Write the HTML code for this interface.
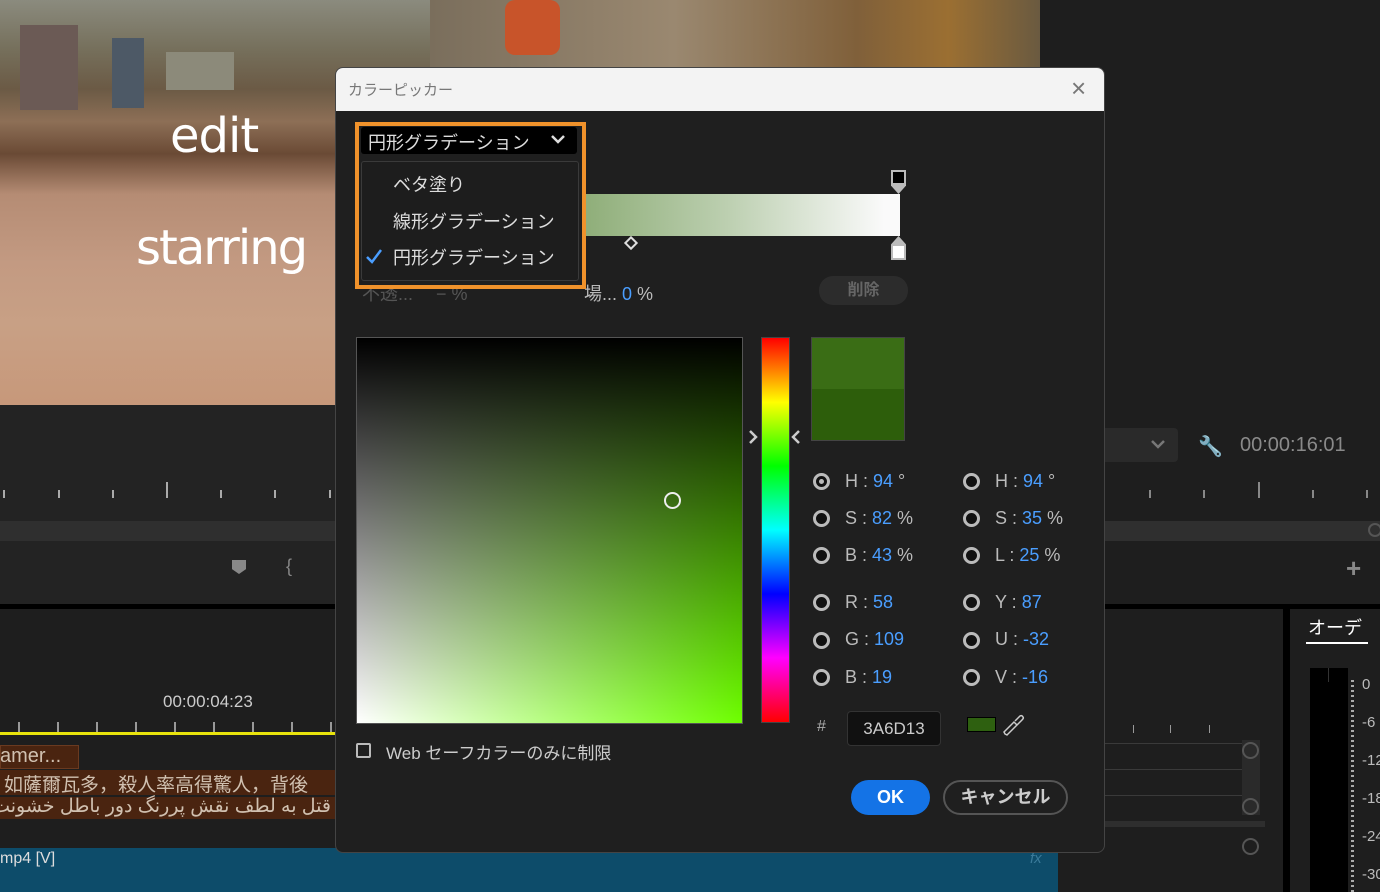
<!DOCTYPE html>
<html><head><meta charset="utf-8"><style>
*{margin:0;padding:0;box-sizing:border-box}
html,body{width:1380px;height:892px;overflow:hidden}
body{background:#1e1e1e;position:relative;font-family:"Liberation Sans","Noto Sans CJK JP",sans-serif;color:#ccc}
.a{position:absolute}
.tick{position:absolute;width:2px;background:#aaa}
.rad{position:absolute;width:17px;height:17px;border-radius:50%;border:3px solid #bbb;background:#111}
.lbl{position:absolute;font-size:18px;color:#bbb}
.lbl b{font-weight:normal;color:#4a9eff}
.jp{font-family:"Liberation Sans","Noto Sans CJK JP",sans-serif}
</style></head><body>
<!-- video -->
<div class="a" style="left:0;top:0;width:1040px;height:405px;background:linear-gradient(180deg,#8b8b7e 0%,#76705c 12%,#6b5a45 22%,#8d6f56 30%,#6a4a35 38%,#b58c74 48%,#c39a82 65%,#c8a085 80%,#c7987a 100%)"></div>
<div class="a" style="left:430px;top:0;width:610px;height:67px;background:linear-gradient(90deg,#7a6e5c,#9a8870 40%,#80603a 70%,#9b6f32 85%,#6a5a40)"></div>
<div class="a" style="left:505px;top:0;width:55px;height:55px;background:#c8542a;border-radius:10px"></div>
<div class="a" style="left:20px;top:25px;width:58px;height:85px;background:#6b5a55"></div>
<div class="a" style="left:112px;top:38px;width:32px;height:70px;background:#4d5966"></div>
<div class="a" style="left:166px;top:52px;width:68px;height:38px;background:#8c8a7a"></div>
<div class="a" style="left:170px;top:108px;font-size:48px;color:#fff;font-family:'DejaVu Sans',sans-serif;letter-spacing:-1px">edit</div>
<div class="a" style="left:136px;top:220px;font-size:48px;color:#fff;font-family:'DejaVu Sans',sans-serif;letter-spacing:-2px">starring</div>
<!-- left lower panels -->
<div class="a" style="left:0;top:405px;width:1040px;height:200px;background:#232323"></div>
<div class="tick" style="left:3px;top:490px;height:8px"></div>
<div class="tick" style="left:58px;top:490px;height:8px"></div>
<div class="tick" style="left:112px;top:490px;height:8px"></div>
<div class="tick" style="left:166px;top:482px;height:16px"></div>
<div class="tick" style="left:220px;top:490px;height:8px"></div>
<div class="tick" style="left:274px;top:490px;height:8px"></div>
<div class="tick" style="left:329px;top:490px;height:8px"></div>
<div class="a" style="left:0;top:521px;width:1380px;height:20px;background:#2f2f2f"></div>
<div class="a" style="left:232px;top:560px;width:14px;height:14px;background:#888;clip-path:polygon(0 0,100% 0,100% 65%,50% 100%,0 65%)"></div>
<div class="a" style="left:286px;top:556px;font-size:18px;color:#888">{</div>
<div class="a" style="left:0;top:604px;width:1380px;height:5px;background:#000"></div>
<div class="a" style="left:0;top:609px;width:1285px;height:283px;background:#1e1e1e"></div>
<div class="a" style="left:163px;top:692px;font-size:17px;color:#ccc">00:00:04:23</div>
<div class="a" style="left:0;top:722px;width:335px;height:12px;background:repeating-linear-gradient(90deg,transparent 0 18px,#999 18px 20px,transparent 20px 39px)"></div>
<div class="a" style="left:0;top:732px;width:1060px;height:3px;background:#e8e30c"></div>
<div class="a" style="left:0;top:745px;width:79px;height:24px;background:#4a2410;border:1px solid #6a3a20"></div>
<div class="a" style="left:0;top:745px;font-size:20px;color:#d0c0b0">amer...</div>
<div class="a" style="left:0;top:770px;width:335px;height:25px;background:#4a2410"></div>
<div class="a" style="left:4px;top:770px;font-size:19px;color:#d0c0b0;white-space:nowrap;width:331px;overflow:hidden">如薩爾瓦多，殺人率高得驚人，背後</div>
<div class="a" style="left:0;top:797px;width:335px;height:22px;background:#4a2410"></div>
<div class="a" style="left:0;top:795px;font-size:19px;color:#d0c0b0;white-space:nowrap;width:331px;overflow:hidden;direction:rtl">قتل به لطف نقش پررنگ دور باطل خشونت</div>
<div class="a" style="left:0;top:848px;width:1058px;height:44px;background:#0d4c6a"></div>
<div class="a" style="left:0;top:850px;font-size:16px;color:#ddd">mp4 [V]</div>
<div class="a" style="left:1030px;top:850px;font-size:15px;color:#3a7a9a;font-style:italic">fx</div>
<!-- right side -->
<div class="a" style="left:1100px;top:428px;width:78px;height:34px;background:#2a2a2a;border-radius:4px"></div>
<svg class="a" style="left:1150px;top:438px" width="16" height="12"><path d="M2 3 L8 9 L14 3" stroke="#777" stroke-width="2.5" fill="none"/></svg>
<div class="a" style="left:1198px;top:434px;font-size:20px;color:#888">🔧</div>
<div class="a" style="left:1240px;top:434px;font-size:20px;color:#8a8a8a">00:00:16:01</div>
<div class="tick" style="left:1149px;top:490px;height:8px;background:#888"></div>
<div class="tick" style="left:1203px;top:490px;height:8px;background:#888"></div>
<div class="tick" style="left:1258px;top:482px;height:16px;background:#888"></div>
<div class="tick" style="left:1312px;top:490px;height:8px;background:#888"></div>
<div class="tick" style="left:1366px;top:490px;height:8px;background:#888"></div>
<div class="a" style="left:1368px;top:523px;width:14px;height:14px;border-radius:50%;border:2px solid #555"></div>
<div class="a" style="left:1346px;top:553px;font-size:26px;color:#888;font-weight:bold">+</div>
<div class="a" style="left:1283px;top:609px;width:7px;height:283px;background:#000"></div>
<div class="a" style="left:1105px;top:743px;width:140px;height:1px;background:#3a3a3a"></div>
<div class="a" style="left:1105px;top:769px;width:140px;height:1px;background:#3a3a3a"></div>
<div class="a" style="left:1105px;top:795px;width:140px;height:1px;background:#3a3a3a"></div>
<div class="a" style="left:1105px;top:821px;width:160px;height:6px;background:#2e2e2e"></div>
<div class="a" style="left:1242px;top:740px;width:18px;height:75px;background:#2a2a2a"></div>
<div class="a" style="left:1242px;top:742px;width:17px;height:17px;border-radius:50%;border:2px solid #555"></div>
<div class="a" style="left:1242px;top:798px;width:17px;height:17px;border-radius:50%;border:2px solid #555"></div>
<div class="a" style="left:1242px;top:838px;width:17px;height:17px;border-radius:50%;border:2px solid #555"></div>
<div class="a" style="left:1133px;top:725px;width:1px;height:8px;background:#999"></div>
<div class="a" style="left:1170px;top:725px;width:1px;height:8px;background:#999"></div>
<div class="a" style="left:1209px;top:725px;width:1px;height:8px;background:#999"></div>
<div class="a jp" style="left:1308px;top:614px;font-size:18px;color:#fff;width:60px;overflow:hidden;white-space:nowrap">オーデ</div>
<div class="a" style="left:1306px;top:642px;width:62px;height:2px;background:#fff"></div>
<div class="a" style="left:1310px;top:668px;width:38px;height:224px;background:#000"></div>
<div class="a" style="left:1328px;top:668px;width:1px;height:14px;background:#333"></div>
<div class="a" style="left:1351px;top:680px;width:3px;height:212px;background:repeating-linear-gradient(180deg,#aaa 0 2px,transparent 2px 5px)"></div>
<div class="a" style="left:1362px;top:666px;font-size:15px;color:#bbb;line-height:38px">0<br>-6<br>-12<br>-18<br>-24<br>-30</div>
<!-- dialog -->
<div class="a" style="left:335px;top:67px;width:770px;height:786px;background:#1f1f1f;border:1px solid #444;border-radius:8px;overflow:hidden">
 <div class="a" style="left:0;top:0;width:770px;height:43px;background:#f3f3f3"></div>
 <div class="a jp" style="left:12px;top:11px;font-size:15px;color:#777">カラーピッカー</div>
 <div class="a" style="left:735px;top:5px;font-size:26px;color:#777;font-weight:100">×</div>
</div>
<!-- gradient bar -->
<div class="a" style="left:585px;top:194px;width:315px;height:42px;background:linear-gradient(90deg,#8fae79,#bccfb0 45%,#fafafa 95%)"></div>
<div class="a" style="left:891px;top:170px;width:15px;height:24px;background:#bbb;clip-path:polygon(0 0,100% 0,100% 65%,50% 100%,0 65%)"></div>
<div class="a" style="left:893px;top:172px;width:11px;height:11px;background:#000"></div>
<div class="a" style="left:891px;top:236px;width:15px;height:24px;background:#bbb;clip-path:polygon(50% 0,100% 35%,100% 100%,0 100%,0 35%)"></div>
<div class="a" style="left:893px;top:246px;width:11px;height:12px;background:#fff"></div>
<div class="a" style="left:626px;top:238px;width:10px;height:10px;border:2px solid #ddd;transform:rotate(45deg)"></div>
<div class="a jp" style="left:362px;top:280px;font-size:18px;color:#555">不透...　 − %</div>
<div class="a jp" style="left:584px;top:280px;font-size:18px;color:#bbb">場... <span style="color:#4a9eff">0</span> %</div>
<div class="a jp" style="left:819px;top:276px;width:89px;height:29px;border-radius:14px;background:#2c2c2c;color:#666;font-size:16px;font-weight:bold;text-align:center;line-height:29px">削除</div>
<!-- dropdown -->
<div class="a" style="left:355px;top:122px;width:231px;height:167px;border:4px solid #f0922b;background:#1f1f1f"></div>
<div class="a" style="left:361px;top:127px;width:216px;height:27px;background:#000;border-radius:3px"></div>
<div class="a jp" style="left:368px;top:129px;font-size:18px;color:#ddd">円形グラデーション</div>
<svg class="a" style="left:550px;top:133px" width="16" height="12"><path d="M2 3 L8 9 L14 3" stroke="#ddd" stroke-width="2.5" fill="none"/></svg>
<div class="a" style="left:361px;top:161px;width:218px;height:120px;border:1px solid #3a3a3a;border-radius:3px;background:#1d1d1d"></div>
<div class="a jp" style="left:393px;top:171px;font-size:18px;color:#ddd">ベタ塗り</div>
<div class="a jp" style="left:393px;top:208px;font-size:18px;color:#ddd">線形グラデーション</div>
<div class="a jp" style="left:393px;top:244px;font-size:18px;color:#ddd">円形グラデーション</div>
<svg class="a" style="left:365px;top:248px" width="18" height="16"><path d="M2 9 L7 14 L16 2" stroke="#4a9eff" stroke-width="2.5" fill="none"/></svg>
<!-- color field -->
<div class="a" style="left:356px;top:337px;width:387px;height:387px;border:1px solid #555;background:linear-gradient(180deg,#000,rgba(0,0,0,0)),linear-gradient(90deg,#fff,#6eff00)"></div>
<div class="a" style="left:664px;top:492px;width:17px;height:17px;border-radius:50%;border:2px solid #eee"></div>
<div class="a" style="left:761px;top:337px;width:29px;height:386px;border:1px solid #444;background:linear-gradient(180deg,#f00,#ff0 16.7%,#0f0 33.3%,#0ff 50%,#00f 66.7%,#f0f 83.3%,#f00)"></div>
<svg class="a" style="left:747px;top:429px" width="12" height="16"><path d="M3 2 L9 8 L3 14" stroke="#ccc" stroke-width="2.5" fill="none"/></svg>
<svg class="a" style="left:790px;top:429px" width="12" height="16"><path d="M9 2 L3 8 L9 14" stroke="#ccc" stroke-width="2.5" fill="none"/></svg>
<div class="a" style="left:811px;top:337px;width:94px;height:104px;border:1px solid #444"><div style="height:51px;background:#3a6d15"></div><div style="height:51px;background:#2d5e0b"></div></div>
<!-- radios -->
<div class="rad" style="left:813px;top:473px"><div style="width:5px;height:5px;background:#bbb;border-radius:50%;margin:3px"></div></div>
<div class="lbl" style="left:845px;top:471px">H : <b>94</b> °</div>
<div class="rad" style="left:813px;top:510px"></div><div class="lbl" style="left:845px;top:508px">S : <b>82</b> %</div>
<div class="rad" style="left:813px;top:547px"></div><div class="lbl" style="left:845px;top:545px">B : <b>43</b> %</div>
<div class="rad" style="left:813px;top:594px"></div><div class="lbl" style="left:845px;top:592px">R : <b>58</b></div>
<div class="rad" style="left:813px;top:632px"></div><div class="lbl" style="left:845px;top:629px">G : <b>109</b></div>
<div class="rad" style="left:813px;top:669px"></div><div class="lbl" style="left:845px;top:667px">B : <b>19</b></div>
<div class="rad" style="left:963px;top:473px"></div><div class="lbl" style="left:995px;top:471px">H : <b>94</b> °</div>
<div class="rad" style="left:963px;top:510px"></div><div class="lbl" style="left:995px;top:508px">S : <b>35</b> %</div>
<div class="rad" style="left:963px;top:547px"></div><div class="lbl" style="left:995px;top:545px">L : <b>25</b> %</div>
<div class="rad" style="left:963px;top:594px"></div><div class="lbl" style="left:995px;top:592px">Y : <b>87</b></div>
<div class="rad" style="left:963px;top:632px"></div><div class="lbl" style="left:995px;top:629px">U : <b>-32</b></div>
<div class="rad" style="left:963px;top:669px"></div><div class="lbl" style="left:995px;top:667px">V : <b>-16</b></div>
<div class="a" style="left:817px;top:718px;font-size:16px;color:#aaa">#</div>
<div class="a" style="left:847px;top:711px;width:94px;height:35px;background:#111;border:1px solid #333;border-radius:4px;color:#ccc;font-size:17px;text-align:center;line-height:33px">3A6D13</div>
<div class="a" style="left:967px;top:717px;width:29px;height:15px;background:#2e6010;border:1px solid #000"></div>
<svg class="a" style="left:1002px;top:713px" width="24" height="24"><path d="M3 21 L5 22 L15 12 L12 9 L2 19 Z M13 8 L18 3 Q20 2 21 4 Q22 5 20 7 L15 12" stroke="#ccc" stroke-width="1.5" fill="none"/></svg>
<div class="a" style="left:851px;top:780px;width:79px;height:35px;background:#1473e6;border-radius:18px;color:#fff;font-weight:bold;font-size:18px;text-align:center;line-height:35px">OK</div>
<div class="a jp" style="left:943px;top:780px;width:125px;height:35px;border:2px solid #555;border-radius:18px;color:#ccc;font-weight:bold;font-size:18px;text-align:center;line-height:31px">キャンセル</div>
<div class="a" style="left:356px;top:743px;width:15px;height:15px;border:2px solid #bbb;border-radius:2px"></div>
<div class="a jp" style="left:386px;top:739px;font-size:17px;color:#ccc">Web セーフカラーのみに制限</div>
</body></html>
